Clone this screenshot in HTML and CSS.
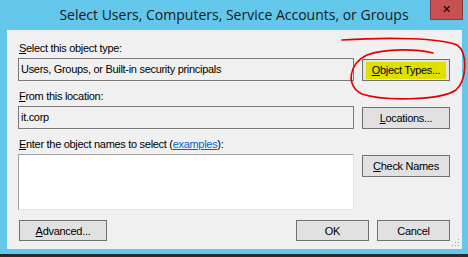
FILE: index.html
```html
<!DOCTYPE html>
<html lang="en">
<head>
    <meta charset="UTF-8">
    <title>Select Users, Computers, Service Accounts, or Groups</title>
    <link rel="stylesheet" href="styles.css">
</head>
<body>
    <div class="window">
        <!-- Title Bar -->
        <div class="titlebar">
            <span class="title">Select Users, Computers, Service Accounts, or Groups</span>
            <div class="close">&#x2715;</div>
        </div>

        <!-- Client Area -->
        <div class="client">
            <div class="label"><u>S</u>elect this object type:</div>
            <div class="row">
                <div class="field">Users, Groups, or Built-in security principals</div>
                <button class="btn highlight"><u>O</u>bject Types...</button>
            </div>

            <div class="label"><u>F</u>rom this location:</div>
            <div class="row">
                <div class="field">it.corp</div>
                <button class="btn"><u>L</u>ocations...</button>
            </div>

            <div class="label"><u>E</u>nter the object names to select (<a href="#">examples</a>):</div>
            <div class="row names-row">
                <textarea class="names"></textarea>
                <button class="btn"><u>C</u>heck Names</button>
            </div>

            <div class="footer">
                <button class="btn"><u>A</u>dvanced...</button>
                <div class="actions">
                    <button class="btn">OK</button>
                    <button class="btn">Cancel</button>
                </div>
            </div>

            <!-- resize grip -->
            <svg class="grip" width="8" height="8" viewBox="0 0 8 8">
                <rect x="6" y="0" width="1" height="1" fill="#a0a0a0"/>
                <rect x="6" y="3" width="1" height="1" fill="#a0a0a0"/>
                <rect x="3" y="3" width="1" height="1" fill="#a0a0a0"/>
                <rect x="6" y="6" width="1" height="1" fill="#a0a0a0"/>
                <rect x="3" y="6" width="1" height="1" fill="#a0a0a0"/>
                <rect x="0" y="6" width="1" height="1" fill="#a0a0a0"/>
            </svg>
        </div>
        <div class="taskbar"></div>

        <!-- hand drawn red circle around the Object Types button -->
        <svg class="scribble" width="468" height="257" viewBox="0 0 468 257">
            <path d="M342,40 C390,37 440,38 457,45 C468,52 467,80 456,90 C440,101 382,101 362,94 C345,86 349,63 367,55 C385,48 418,49 433,53"
                  fill="none" stroke="#e40000" stroke-width="1.6" stroke-linecap="round"/>
        </svg>
    </div>
</body>
</html>
```

FILE: styles.css
```css
body {
    margin: 0;
    font-family: "Liberation Sans", Arial, sans-serif;
    font-size: 11px;
    letter-spacing: -0.3px;
    color: #000;
}

.window {
    position: relative;
    width: 468px;
    height: 257px;
    background-color: #62c7ea;
    overflow: hidden;
}

/* Title Bar */
.titlebar {
    height: 30px;
    display: flex;
    justify-content: center;
    align-items: center;
}
.title {
    font-family: "Open Sans", "Noto Sans", sans-serif;
    font-size: 14px;
    letter-spacing: 0;
    color: #1a1a1a;
    padding-bottom: 1px;
}
.close {
    position: absolute;
    top: 0;
    left: 430px;
    width: 33px;
    height: 20px;
    background-color: #c75050;
    border: 1px solid #8a3a3a;
    border-top: none;
    box-sizing: border-box;
    color: #000;
    font-family: "DejaVu Sans", sans-serif;
    font-weight: bold;
    font-size: 11px;
    display: flex;
    justify-content: center;
    align-items: center;
}

/* Client Area */
.client {
    position: relative;
    margin: 0 6px 0 7px;
    height: 219px;
    background-color: #f0f0f0;
    padding: 11px 12px 0 11px;
    box-sizing: border-box;
}
.label {
    height: 15px;
    line-height: 15px;
    margin-bottom: 2px;
    padding-left: 1px;
}
.label a {
    color: #0066cc;
}
.row {
    display: flex;
    gap: 8px;
    align-items: flex-start;
    margin-bottom: 8px;
}
.field {
    width: 336px;
    height: 23px;
    box-sizing: border-box;
    border: 1px solid #7a7a7a;
    padding: 0 0 0 2px;
    line-height: 20px;
    background-color: #f0f0f0;
}
.btn {
    width: 88px;
    height: 22px;
    margin-top: 1px;
    box-sizing: border-box;
    border: 1px solid #707070;
    background-color: #e1e1e1;
    font-family: "Liberation Sans", Arial, sans-serif;
    font-size: 11px;
    letter-spacing: -0.3px;
    color: #000;
    padding: 0;
}
.highlight {
    background-color: #e3e3e3;
    background-image: linear-gradient(#e0e000, #e0e000);
    background-size: 80px 17px;
    background-position: center;
    background-repeat: no-repeat;
}
.names-row {
    margin-bottom: 10px;
}
.names {
    width: 336px;
    height: 56px;
    box-sizing: border-box;
    margin: 0;
    border-style: solid;
    border-width: 1px;
    border-color: #a0a0a0 #e3e3e3 #e3e3e3 #a0a0a0;
    background-color: #fff;
    resize: none;
}
.footer {
    display: flex;
    justify-content: space-between;
    padding-left: 1px;
}
.footer .btn {
    height: 21px;
    margin-top: 0;
}
.actions {
    display: flex;
    gap: 8px;
}
.actions .btn {
    width: 73px;
}
.grip {
    position: absolute;
    right: 2px;
    bottom: 2px;
}
.taskbar {
    position: absolute;
    left: 0;
    right: 0;
    bottom: 0;
    height: 3px;
    background-color: #2b2b2b;
}
.scribble {
    position: absolute;
    top: 0;
    left: 0;
    pointer-events: none;
}
```
